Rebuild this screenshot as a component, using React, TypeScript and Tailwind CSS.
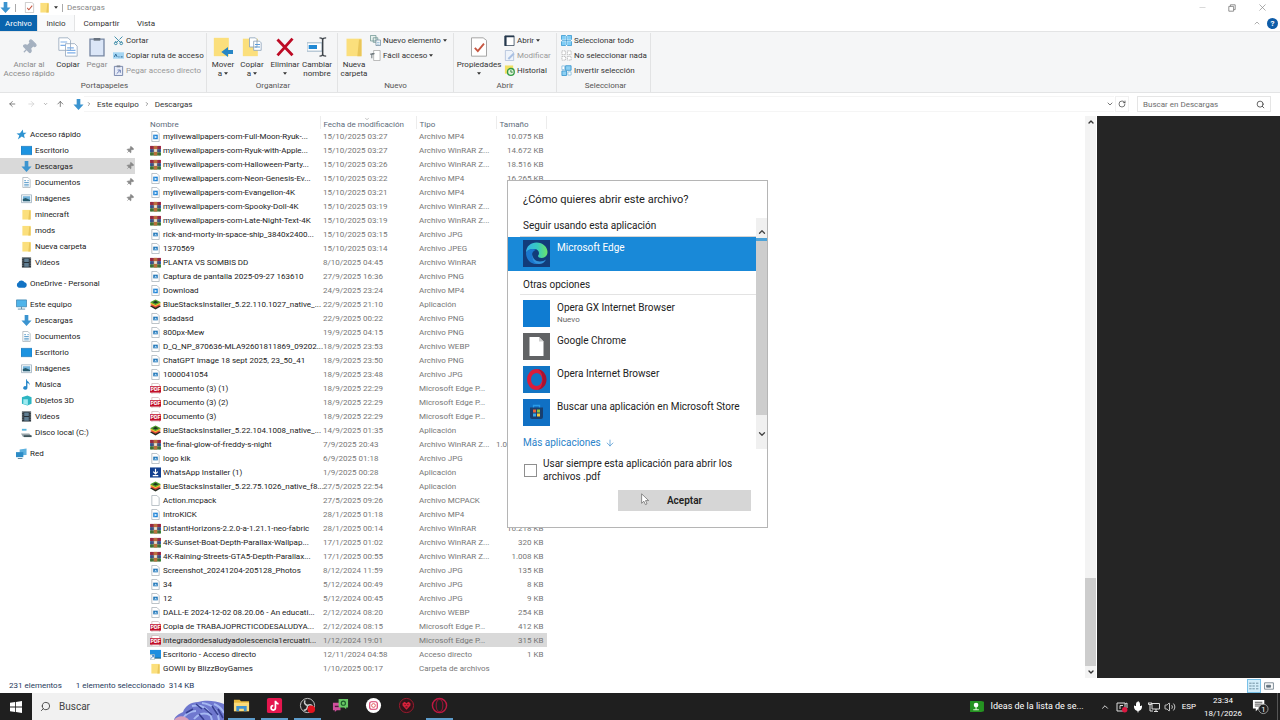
import { useState } from "react";
import {
  ArrowDown,
  ArrowLeft,
  ArrowRight,
  ArrowUp,
  ChevronDown,
  ChevronRight,
  ChevronUp,
  Mic,
  Minus,
  Pin,
  RotateCw,
  Scissors,
  Search,
  Volume2,
  X,
} from "lucide-react";

const files = [
  ["mp4", "mylivewallpapers-com-Full-Moon-Ryuk-...", "15/10/2025 03:27", "Archivo MP4", "10.075 KB"],
  ["rar", "mylivewallpapers-com-Ryuk-with-Apple...", "15/10/2025 03:27", "Archivo WinRAR Z...", "14.672 KB"],
  ["rar", "mylivewallpapers-com-Halloween-Party...", "15/10/2025 03:26", "Archivo WinRAR Z...", "18.516 KB"],
  ["mp4", "mylivewallpapers.com-Neon-Genesis-Ev...", "15/10/2025 03:22", "Archivo MP4", "16.265 KB"],
  ["mp4", "mylivewallpapers-com-Evangelion-4K", "15/10/2025 03:21", "Archivo MP4", ""],
  ["rar", "mylivewallpapers-com-Spooky-Doll-4K", "15/10/2025 03:19", "Archivo WinRAR Z...", ""],
  ["rar", "mylivewallpapers-com-Late-Night-Text-4K", "15/10/2025 03:19", "Archivo WinRAR Z...", ""],
  ["img", "rick-and-morty-in-space-ship_3840x2400...", "15/10/2025 03:15", "Archivo JPG", ""],
  ["img", "1370569", "15/10/2025 03:14", "Archivo JPEG", ""],
  ["rar", "PLANTA VS SOMBIS DD", "8/10/2025 04:45", "Archivo WinRAR", ""],
  ["img", "Captura de pantalla 2025-09-27 163610", "27/9/2025 16:36", "Archivo PNG", ""],
  ["mp4", "Download", "24/9/2025 23:24", "Archivo MP4", ""],
  ["bs", "BlueStacksInstaller_5.22.110.1027_native_...", "22/9/2025 21:10", "Aplicación", ""],
  ["img", "sdadasd", "22/9/2025 00:22", "Archivo PNG", ""],
  ["img", "800px-Mew", "19/9/2025 04:15", "Archivo PNG", ""],
  ["img", "D_Q_NP_870636-MLA92601811869_09202...", "18/9/2025 23:53", "Archivo WEBP", ""],
  ["img", "ChatGPT Image 18 sept 2025, 23_50_41", "18/9/2025 23:50", "Archivo PNG", ""],
  ["img", "1000041054", "18/9/2025 23:48", "Archivo JPG", ""],
  ["pdf", "Documento (3) (1)", "18/9/2025 22:29", "Microsoft Edge P...", ""],
  ["pdf", "Documento (3) (2)", "18/9/2025 22:29", "Microsoft Edge P...", ""],
  ["pdf", "Documento (3)", "18/9/2025 22:29", "Microsoft Edge P...", ""],
  ["bs", "BlueStacksInstaller_5.22.104.1008_native_...", "14/9/2025 01:35", "Aplicación", ""],
  ["rar", "the-final-glow-of-freddy-s-night", "7/9/2025 20:43", "Archivo WinRAR Z...", "1.043.005 KB"],
  ["img", "logo kik", "6/9/2025 01:18", "Archivo JPG", ""],
  ["wa", "WhatsApp Installer (1)", "1/9/2025 00:28", "Aplicación", ""],
  ["bs", "BlueStacksInstaller_5.22.75.1026_native_f8...", "27/5/2025 22:54", "Aplicación", ""],
  ["blank", "Action.mcpack", "27/5/2025 09:26", "Archivo MCPACK", ""],
  ["mp4", "IntroKICK", "28/1/2025 01:18", "Archivo MP4", ""],
  ["rar", "DistantHorizons-2.2.0-a-1.21.1-neo-fabric", "28/1/2025 00:14", "Archivo WinRAR", "16.218 KB"],
  ["rar", "4K-Sunset-Boat-Depth-Parallax-Wallpap...", "17/1/2025 01:02", "Archivo WinRAR Z...", "320 KB"],
  ["rar", "4K-Raining-Streets-GTA5-Depth-Parallax...", "17/1/2025 00:55", "Archivo WinRAR Z...", "1.008 KB"],
  ["img", "Screenshot_20241204-205128_Photos", "8/12/2024 11:59", "Archivo JPG", "135 KB"],
  ["img", "34", "5/12/2024 00:49", "Archivo JPG", "8 KB"],
  ["img", "12", "5/12/2024 00:45", "Archivo JPG", "9 KB"],
  ["img", "DALL-E 2024-12-02 08.20.06 - An educati...", "2/12/2024 08:20", "Archivo WEBP", "254 KB"],
  ["pdf", "Copia de TRABAJOPRCTICODESALUDYA...", "2/12/2024 08:15", "Microsoft Edge P...", "412 KB"],
  ["pdf", "integradordesaludyadolescencia1ercuatri...", "1/12/2024 19:01", "Microsoft Edge P...", "315 KB"],
  ["lnk", "Escritorio - Acceso directo", "12/11/2024 04:58", "Acceso directo", "1 KB"],
  ["folder", "GOWII by BlizzBoyGames", "1/10/2025 00:17", "Carpeta de archivos", ""],
];

const sidebar = [
  {
    icon: "star",
    label: "Acceso rápido",
    items: [
      ["desktop", "Escritorio", true],
      ["down", "Descargas", true],
      ["doc", "Documentos", true],
      ["picture", "Imágenes", true],
      ["folder", "minecraft", false],
      ["folder", "mods", false],
      ["folder", "Nueva carpeta", false],
      ["video", "Vídeos", false],
    ],
  },
  { icon: "cloud", label: "OneDrive - Personal", items: [] },
  {
    icon: "pc",
    label: "Este equipo",
    items: [
      ["down", "Descargas", false],
      ["doc", "Documentos", false],
      ["desktop", "Escritorio", false],
      ["picture", "Imágenes", false],
      ["music", "Música", false],
      ["cube", "Objetos 3D", false],
      ["video", "Vídeos", false],
      ["disk", "Disco local (C:)", false],
    ],
  },
  { icon: "net", label: "Red", items: [] },
];

const Page = () => <path d="M2 .5h5.500L10 3v8.500H2z" fill="#fff" stroke="#a3adb5" strokeWidth=".8" />;

const glyphs: any = {
  mp4: (
    <>
      <Page />
      <path d="M3.500 4h5v5h-5z" fill="#1f83d6" />
      <path d="M5 5l3 1.500-3 1.700z" fill="#d8efff" />
    </>
  ),
  img: (
    <>
      <Page />
      <path d="M3.500 4h5v4h-5z" fill="#2478b8" />
      <path d="M4.500 7l1.500-2 2 2z" fill="#b9defa" />
    </>
  ),
  blank: <Page />,
  rar: (
    <>
      <path d="M0 1h12v3.500H0z" fill="#a52c46" />
      <path d="M0 4.500h12V8H0z" fill="#3560a0" />
      <path d="M0 8h12v3.500H0z" fill="#3b8438" />
      <path d="M4 1h4v10.500H4z" fill="#b9703d" />
      <path d="M4.500 4.500h3v3h-3z" fill="#e8e4d8" />
      <path d="M2 1v10.500M10 1v10.500" stroke="#5d2c3c" strokeWidth=".6" />
    </>
  ),
  bs: (
    <>
      <path d="M0 8l6-3 6 3-6 3.500z" fill="#252a20" />
      <path d="M0 6.500l6-3 6 3-6 3z" fill="#e0483a" />
      <path d="M0 5l6-3 6 3-6 3z" fill="#f2c531" />
      <path d="M0 3.500L6 .5l6 3-6 3z" fill="#4f9d2f" />
      <path d="M3 3.500l3-1.500 3 1.500-3 1.500z" fill="#1d3520" />
    </>
  ),
  pdf: (
    <>
      <path d="M2 .5h7L10.500 2v10H2z" fill="#fff" stroke="#c9a6aa" strokeWidth=".7" />
      <path d="M0 3.500h12v7H0z" fill="#c1102a" />
      <text x="6" y="9.200" textAnchor="middle" fontSize="6" fontWeight="700" fill="#fff">
        PDF
      </text>
    </>
  ),
  wa: (
    <>
      <path d="M0 .5h12v11H0z" fill="#123f8f" />
      <path d="M6 2v5M3.500 5L6 7.500 8.500 5M3 9.500h6" stroke="#fff" strokeWidth="1.300" fill="none" />
    </>
  ),
  lnk: (
    <>
      <path d="M0 1h12v9H0z" fill="#1d8fe0" />
      <path d="M0 6h5v5.500H0z" fill="#fff" stroke="#8aa" strokeWidth=".5" />
      <path d="M1 10.500l3-3.500M2 7h2v2" stroke="#1b66b5" fill="none" strokeWidth=".8" />
      <path d="M5 10h7" stroke="#145" strokeWidth=".8" />
    </>
  ),
  folder: (
    <>
      <path d="M1.500 1h9v10.500h-9z" fill="#fbdf7c" />
      <path d="M9 1.500h1.500v10H8z" fill="#e9c65a" />
    </>
  ),
  star: (
    <path d="M7.500 .5l.4 3.500 3.600.2-2.800 2.200L9.500 10 6.300 8.300 2 11.500l1.600-4.400L.5 5l3.800-.5z" fill="#2e93d1" />
  ),
  desktop: <path d="M0 1.500h12v9H0z" fill="#1c93e0" stroke="#1270b5" strokeWidth=".7" />,
  down: <path d="M4 0h4v6h3.500L6 12 .5 6H4z" fill="#3b94d0" />,
  doc: (
    <>
      <Page />
      <path d="M3.500 4h2M3.500 6h5M3.500 8h5M3.500 9.700h5M7 4h1.500" stroke="#5c9dca" strokeWidth="1" />
    </>
  ),
  picture: (
    <>
      <path d="M.5 2h11v8.500H.5z" fill="#fff" stroke="#8fa5b5" strokeWidth=".8" />
      <path d="M2 3.500h8V9H2z" fill="#74b4dc" />
      <path d="M2 9V6.500L5 5.500l5 2V9z" fill="#285d70" />
    </>
  ),
  video: (
    <>
      <path d="M1 .5h10v11H1z" fill="#263038" />
      <path d="M3.500 1.500h5v4h-5zM3.500 6.500h5v4h-5z" fill="#607e92" />
      <path d="M2 1v10M10 1v10" stroke="#d0d4d6" strokeWidth=".8" strokeDasharray="1 1" />
    </>
  ),
  cloud: <path d="M3 10.500a3 3 0 0 1-.5-5.500 3.700 3.700 0 0 1 6.800-.3 3 3 0 0 1 .4 5.800z" fill="#1273c4" />,
  pc: (
    <>
      <path d="M.5 1h11v7.500H.5z" fill="#4fb4ea" stroke="#3c82ae" strokeWidth=".8" />
      <path d="M2 11h8M6 8.500V11" stroke="#5e8ca8" />
    </>
  ),
  music: <path d="M6 0c.3 3 4 3 3.500 7-.5-2-1.800-2.500-2.500-2.700V9.500A2.300 2 0 1 1 5.500 7.800V0z" fill="#2687c9" />,
  cube: (
    <>
      <path d="M1 2.500L7 .5l4.500 2v7l-4.500 2-6-2z" fill="#2db5c2" />
      <path d="M2.500 4.500h5v6.500l-5-1.200z" fill="#9deaf0" />
    </>
  ),
  disk: (
    <>
      <path d="M1 2h5v2H1z" fill="#58b4dd" />
      <path d="M0 7h9l3 3.500H2z" fill="#99a5ab" />
      <path d="M3 9h8.500v2H3z" fill="#3f555b" />
    </>
  ),
  net: (
    <>
      <path d="M4 1.500l7.500-1v7L4 8z" fill="#5fb2df" />
      <path d="M0 4.500h8v5.500H0z" fill="#2d8cc6" />
      <path d="M2 11.500h5" stroke="#55788e" />
    </>
  ),
  newItem: (
    <>
      <path d="M.5.5h6v6h-6zM3.500 3h5v5h-5z" fill="#e8f1ee" stroke="#68918e" strokeWidth=".8" />
      <path d="M6.500 5.500h5v6h-5z" fill="#fff" stroke="#68869b" strokeWidth=".8" />
      <path d="M7.500 8h3M7.500 10h3" stroke="#70a6c8" strokeWidth=".8" />
    </>
  ),
  easy: (
    <>
      <path d="M4 .5h7v11H4z" fill="#fff" stroke="#a3a3a3" strokeWidth=".8" />
      <path d="M2 9V4h3M0 4.500h4" fill="none" stroke="#606b70" />
    </>
  ),
  open: (
    <>
      <path d="M1 1h10v10.500H1z" fill="#fff" stroke="#25384d" strokeWidth=".8" />
      <path d="M1 .8h10v1.700H1zM.6 1h2.200v10.900H.6z" fill="#25384d" />
    </>
  ),
  edit: (
    <>
      <path d="M1.500.5h7L10.500 3v8.500h-9z" fill="#eef3fa" stroke="#a7b9d4" strokeWidth=".8" />
      <path d="M4 9l6-6 1.500 1.500-6 6z" fill="#a9c0e3" />
    </>
  ),
  history: (
    <>
      <path d="M1 .5h9v9H1z" fill="#f0df63" />
      <circle cx="7.500" cy="7.500" r="3.700" fill="#e2f3dc" stroke="#339a43" strokeWidth="1.400" />
      <path d="M7.500 5.500v2.300h2" stroke="#2a7d3b" fill="none" />
    </>
  ),
  selAll: (
    <>
      <path d="M.5.5h11v11H.5z" fill="#80cdf5" stroke="#2b91ce" strokeWidth=".8" />
      <path d="M6 0v12M0 6h12" stroke="#fff" strokeWidth="1.500" />
      <path d="M6 1v10M1 6h10" stroke="#2b91ce" strokeWidth=".7" />
    </>
  ),
  selNone: (
    <path
      d="M1 1h4v4H1zM7 1h4v4H7zM1 7h4v4H1zM7 7h4v4H7z"
      fill="#fff"
      stroke="#aaa"
      strokeWidth=".8"
      strokeDasharray="1.500 .7"
    />
  ),
  selInv: (
    <>
      <path d="M5 .8h6v5H5zM1 6.500h5v5H1z" fill="#8dd0f3" stroke="#3694cd" strokeWidth=".9" />
      <path d="M1 1h3v4H1zM7.500 7.500h3.500v3.500H7.500z" fill="#fff" stroke="#78b6dc" strokeWidth=".8" />
    </>
  ),
  path: (
    <>
      <path d="M0 2.500h12v7H0z" fill="#a5d5f2" />
      <path d="M1.500 7.500L3 4.500 4.500 7.500M6 7.500h1M8.500 7.500h2" stroke="#24618f" fill="none" />
    </>
  ),
  shortcut: (
    <>
      <path d="M1.500 1.500h9v10h-9z" fill="#e7ecf8" stroke="#7382a8" />
      <path d="M4 .5h4v2H4z" fill="#7b8493" />
      <path d="M4 9.500L7.500 6M5 5.500h3v3" stroke="#6477b0" fill="none" />
    </>
  ),
  check: (
    <>
      <path d="M1.500.5h7L10.500 2v9.500h-9z" fill="#fff" stroke="#a5a5a5" strokeWidth=".6" />
      <path d="M3.500 6.500L5.300 8.500 9 4" stroke="#c65540" strokeWidth="1.100" fill="none" />
    </>
  ),
  copy: (
    <>
      <path d="M.5.5h5.500L7.500 2v6h-7zM4.500 4H10l1.500 1.500v6h-7z" fill="#fff" stroke="#98a8bd" strokeWidth=".5" />
      <path d="M1.500 3h4M1.500 5h3M5.500 6.500h4M5.500 8h5M5.500 9.500h5" stroke="#7eaee7" strokeWidth=".7" />
    </>
  ),
  paste: (
    <>
      <path d="M1.800 1.300h8.400v10H1.800z" fill="#dbe6f7" stroke="#7787a3" strokeWidth=".8" />
      <path d="M4 .6h4v1.600H4z" fill="#68727f" />
    </>
  ),
  move: (
    <>
      <path d="M.5.5h9v11h-9z" fill="#fbdf7c" />
      <path d="M12 7.800H9V6L5 9l4 3v-1.800h3z" fill="#2786c5" />
    </>
  ),
  copyTo: (
    <>
      <path d="M.5 1h9v10.500h-9z" fill="#fbdf7c" />
      <path d="M4.500.5H8L9 1.500V6H4.500zM7 2.500h3.500l1 1V8H7z" fill="#fff" stroke="#8da3bb" strokeWidth=".5" />
      <path d="M7.800 4.500h3M7.800 6h3" stroke="#5d9bd8" strokeWidth=".6" />
    </>
  ),
  del: <path d="M1.500 1.500L10.500 11M10.500 1L1.500 11" stroke="#bd0b25" strokeWidth="1.700" />,
  rename: (
    <>
      <path d="M0 3.500h9v5H0z" fill="#fff" stroke="#9bb3c5" strokeWidth=".6" />
      <path d="M1 4.800h5v2.400H1z" fill="#2189d4" />
      <path
        d="M7.500.5c1.500 0 1.800.5 1.800 1v9c0 .5-.3 1-1.800 1M11.500.5c-1.500 0-2 .5-2 1v9c0 .5.5 1 2 1"
        stroke="#3c4248"
        strokeWidth=".7"
        fill="none"
      />
    </>
  ),
};

const Icon = ({ name, className = "size-[11px]" }: any) => (
  <svg viewBox="0 0 12 12" className={`shrink-0 ${className}`} aria-hidden="true">
    {glyphs[name]}
  </svg>
);

const Caret = () => (
  <svg viewBox="0 0 6 4" className="inline-block h-[3px] w-1 shrink-0" aria-hidden="true">
    <path d="M0 0h6L3 4z" fill="#333" />
  </svg>
);

const BigButton = ({ icon, lines, caret, className, dim }: any) => (
  <button
    type="button"
    className={`flex shrink-0 flex-col items-center whitespace-nowrap ${dim ? "text-[#8a8a8a]" : ""} ${className}`}
  >
    <span className="flex h-[27px] items-center justify-center">
      {icon === "pin" ? (
        <Pin className="size-4 rotate-45 fill-[#a5b1c0] text-[#a5b1c0]" />
      ) : (
        <Icon name={icon} className="size-5" />
      )}
    </span>
    {lines.map((line: string, i: number) => (
      <span key={i} className="flex h-[9px] items-center gap-[2px] leading-[9px]">
        {line}
        {caret && i === lines.length - 1 && <Caret />}
      </span>
    ))}
  </button>
);

const SmallButton = ({ icon, label, caret, dim }: any) => (
  <button type="button" className={`flex h-[15px] items-center gap-[2px] whitespace-nowrap ${dim ? "text-[#999]" : ""}`}>
    {icon === "cut" ? <Scissors className="size-[11px] -rotate-90 text-[#3688a5]" /> : <Icon name={icon} />}
    {label}
    {caret && <Caret />}
  </button>
);

const Group = ({ label, className, children }: any) => (
  <div className={`flex shrink-0 flex-col border-r border-[#e2e3e4] ${className}`}>
    <div className="flex h-[47px] items-start">{children}</div>
    <div className="text-center text-[#555]">{label}</div>
  </div>
);

const Ribbon = () => (
  <div className="flex h-[62px] border-y border-[#e3e4e5] bg-[#f5f6f7] pt-[1px] text-[#333]">
    <Group label="Portapapeles" className="w-[207px] pl-[3px]">
      <BigButton icon="pin" lines={["Anclar al", "Acceso rápido"]} className="w-[52px]" dim />
      <BigButton icon="copy" lines={["Copiar"]} className="w-[26px]" />
      <BigButton icon="paste" lines={["Pegar"]} className="w-8" dim />
      <div>
        <SmallButton icon="cut" label="Cortar" />
        <SmallButton icon="path" label="Copiar ruta de acceso" />
        <SmallButton icon="shortcut" label="Pegar acceso directo" dim />
      </div>
    </Group>
    <Group label="Organizar" className="w-[131px] pl-[2px]">
      <BigButton icon="move" lines={["Mover", "a"]} className="w-[28px]" caret />
      <BigButton icon="copyTo" lines={["Copiar", "a"]} className="w-[30px]" caret />
      <BigButton icon="del" lines={["Eliminar", ""]} className="w-9" caret />
      <BigButton icon="rename" lines={["Cambiar", "nombre"]} className="w-[28px]" />
    </Group>
    <Group label="Nuevo" className="w-[116px]">
      <BigButton icon="folder" lines={["Nueva", "carpeta"]} className="w-8" />
      <div>
        <SmallButton icon="newItem" label="Nuevo elemento" caret />
        <SmallButton icon="easy" label="Fácil acceso" caret />
      </div>
    </Group>
    <Group label="Abrir" className="w-[103px]">
      <BigButton icon="check" lines={["Propiedades", ""]} className="w-[50px]" caret />
      <div>
        <SmallButton icon="open" label="Abrir" caret />
        <SmallButton icon="edit" label="Modificar" dim />
        <SmallButton icon="history" label="Historial" />
      </div>
    </Group>
    <Group label="Seleccionar" className="w-[94px] pl-1">
      <div>
        <SmallButton icon="selAll" label="Seleccionar todo" />
        <SmallButton icon="selNone" label="No seleccionar nada" />
        <SmallButton icon="selInv" label="Invertir selección" />
      </div>
    </Group>
  </div>
);

const Header = () => (
  <header>
    <div className="flex h-[15px] items-center justify-between text-[#888]">
      <div className="flex items-center gap-1">
        <Icon name="down" />
        <span className="h-2 w-px bg-[#aaa]" />
        <Icon name="check" className="ml-1 size-[11px]" />
        <Icon name="folder" />
        <Caret />
        <span className="h-2 w-px bg-[#aaa]" />
        <h1>Descargas</h1>
      </div>
      <div className="flex items-center gap-[21px] pr-3 text-[#888]">
        <button type="button" aria-label="Minimizar">
          <Minus className="size-[9px] text-[#bbb]" strokeWidth={1.5} />
        </button>
        <button type="button" aria-label="Restaurar">
          <svg viewBox="0 0 10 10" className="size-2" fill="none" stroke="#777">
            <path d="M1 3h6v6H1zM3 3V1h6v6H7" />
          </svg>
        </button>
        <button type="button" aria-label="Cerrar">
          <X className="size-[11px]" strokeWidth={1.5} />
        </button>
      </div>
    </div>
    <nav className="flex h-4 items-center text-[#333]">
      <a href="#archivo" className="flex h-4 w-[37px] items-center justify-center bg-[#0a64ad] text-white">
        Archivo
      </a>
      <a
        href="#inicio"
        className="flex h-4 w-[38px] items-center justify-center border-x border-[#e3e4e5] bg-[#f9fafb]"
      >
        Inicio
      </a>
      <a href="#compartir" className="w-[53px] text-center">
        Compartir
      </a>
      <a href="#vista" className="w-9 text-center">
        Vista
      </a>
      <span className="ml-auto flex items-center gap-[6px] pr-[2px]">
        <ChevronUp className="size-2 text-[#888]" />
        <button type="button" className="size-[11px] rounded-full bg-[#0e5ca8] leading-[11px] font-bold text-white">
          ?
        </button>
      </span>
    </nav>
    <Ribbon />
    <div className="flex h-[23px] items-center pb-[1px] text-[#333]">
      <div className="flex w-[84px] items-center gap-2 pl-2 text-[#555]">
        <ArrowLeft className="size-[10px]" />
        <ArrowRight className="ml-[2px] size-[10px] text-[#ccc]" />
        <ChevronDown className="size-[6px]" />
        <ArrowUp className="size-[10px]" />
        <Icon name="down" />
      </div>
      <div className="flex h-4 flex-1 items-center gap-[5px] border-y border-[#f5f5f5] pl-[2px]">
        <ChevronRight className="size-[6px]" />
        <span>Este equipo</span>
        <ChevronRight className="size-[6px]" />
        <span>Descargas</span>
        <ChevronDown className="ml-auto size-2" />
      </div>
      <button
        type="button"
        aria-label="Actualizar"
        className="mr-2 ml-[1px] flex h-4 w-[14px] items-center justify-center border border-[#f0f0f0]"
      >
        <RotateCw className="size-2" />
      </button>
      <label className="mr-[9px] flex h-4 w-[134px] items-center border border-[#e5e5e5] px-[5px]">
        <input
          type="search"
          placeholder="Buscar en Descargas"
          aria-label="Buscar en Descargas"
          className="w-0 flex-1 outline-none placeholder:text-[#6d6d6d]"
        />
        <Search className="size-[9px]" />
      </label>
    </div>
  </header>
);

const Sidebar = () => (
  <aside className="flex w-[147px] shrink-0 flex-col gap-[5px] pt-[10px] text-[#222]">
    {sidebar.map((section, s) => (
      <div key={section.label}>
        <a href="#" className="flex h-4 items-center gap-[3px] pl-4">
          <Icon name={section.icon} />
          {section.label}
        </a>
        {section.items.map(([icon, label, pinned]: any) => (
          <a
            key={label}
            href="#"
            className={`mr-3 flex h-4 items-center gap-[3px] pl-[21px] ${s === 0 && label === "Descargas" ? "bg-[#d9d9d9]" : ""}`}
          >
            <Icon name={icon} />
            {label}
            {pinned && <Pin className="mr-[1px] ml-auto size-2 rotate-45 fill-[#888] text-[#888]" />}
          </a>
        ))}
      </div>
    ))}
  </aside>
);

const FileTable = () => {
  const [selected, setSelected] = useState(36);

  return (
    <main className="relative min-w-0 flex-1">
      <ChevronDown className="absolute top-0 left-[217px] size-[6px] text-[#888]" />
      <table className="w-[400px] table-fixed whitespace-nowrap text-[#777]">
        <thead>
          <tr className="h-[13px] text-left text-[#5d6b7b]">
            <th className="w-[173px] border-r border-[#ececec] pt-1 pl-[3px] leading-[9px] font-normal">Nombre</th>
            <th className="w-24 border-r border-[#ececec] pt-1 pl-[3px] leading-[9px] font-normal">
              Fecha de modificación
            </th>
            <th className="w-20 border-r border-[#ececec] pt-1 pl-[3px] leading-[9px] font-normal">Tipo</th>
            <th className="border-r border-[#ececec] pt-1 pl-[3px] leading-[9px] font-normal">Tamaño</th>
          </tr>
        </thead>
        <tbody>
          {files.map(([icon, name, date, type, size], i) => (
            <tr key={name} onClick={() => setSelected(i)} className={`h-[14px] ${i === selected ? "bg-[#d9d9d9]" : ""}`}>
              <td className="pl-[3px]">
                <div className="flex items-center gap-[2px]">
                  <Icon name={icon} />
                  <span className="text-[#222]">{name}</span>
                </div>
              </td>
              <td className="pl-[3px]">{date}</td>
              <td className="pl-[3px]">{type}</td>
              <td className="pr-[3px] text-right">{size}</td>
            </tr>
          ))}
        </tbody>
      </table>
    </main>
  );
};

const EdgeLogo = () => (
  <svg viewBox="0 0 27 27" className="size-[27px] shrink-0" aria-hidden="true">
    <defs>
      <linearGradient id="edgeTop" x1="0" x2="1">
        <stop offset="0" stopColor="#35b3ea" />
        <stop offset=".55" stopColor="#38cbbd" />
        <stop offset="1" stopColor="#6ce36a" />
      </linearGradient>
    </defs>
    <path d="M0 0h27v27H0z" fill="#123c7a" />
    <path
      d="M3 13C3 6 8 2.500 13.500 2.500 20 2.500 24.500 7 24.500 12c0 4-3 6-6 6-2 0-3.500-1-3.500-2 0-.7 1-1 1-3 0-2-2-4-4.500-4C7 9 3.500 11 3 13z"
      fill="url(#edgeTop)"
    />
    <path d="M3 13c.5-2.500 3.500-4 7-4 1 0 2 .2 3 .8-3 1-4 3-4 5.500 0 4 3 7.500 7 8.500C9 25.500 3 20 3 13z" fill="#1b78cf" />
    <path d="M9.500 14c-.3 4 3 7.500 7.500 7.500 2.500 0 4.500-.7 6-2-1.500 3-4 4.500-7 4.500-4.500 0-8-5-6.500-10z" fill="#3192dc" />
  </svg>
);

const apps = [
  {
    name: "Opera GX Internet Browser",
    note: "Nuevo",
    art: <path d="M0 0h27v27H0z" fill="#0f7cd2" />,
  },
  {
    name: "Google Chrome",
    art: (
      <>
        <path d="M0 0h27v27H0z" fill="#616365" />
        <path d="M6.500 4h9.500l4.500 4.500V23h-14z" fill="#fff" />
        <path d="M16 4v4.500h4.500z" fill="#cfcfcf" />
      </>
    ),
  },
  {
    name: "Opera Internet Browser",
    art: (
      <>
        <path d="M0 0h27v27H0z" fill="#1275c4" />
        <ellipse cx="13.500" cy="13.500" rx="7.500" ry="8.500" fill="none" stroke="#da1d3c" strokeWidth="4" />
        <path
          d="M15 3.200c5 .8 8.500 5 8.500 10.300S20 23 15 23.800c3-1.500 4.500-5.500 4.500-10.300S18 4.700 15 3.200z"
          fill="#a91330"
        />
      </>
    ),
  },
  {
    name: "Buscar una aplicación en Microsoft Store",
    art: (
      <>
        <path d="M0 0h27v27H0z" fill="#1070c4" />
        <path d="M10.500 9V6.500h6V9" fill="none" stroke="#2a9be8" strokeWidth="1.300" />
        <path d="M7 8.500h13v9.500a2 2 0 0 1-2 2H9a2 2 0 0 1-2-2z" fill="#183f70" />
        <path d="M10 10.500h3v3h-3z" fill="#e8643b" />
        <path d="M14 10.500h3v3h-3z" fill="#8dc63f" />
        <path d="M10 14.500h3v3h-3z" fill="#39a9e8" />
        <path d="M14 14.500h3v3h-3z" fill="#f5cb3d" />
      </>
    ),
  },
];

const OpenWithDialog = () => (
  <section
    role="dialog"
    aria-labelledby="dialogTitle"
    className="absolute top-[180px] left-[507px] w-[261px] border border-[#b5b5b5] bg-white pb-4 text-[10px] text-[#222]"
  >
    <h2 id="dialogTitle" className="flex h-[37px] items-center pl-[15px] text-[11px]">
      ¿Cómo quieres abrir este archivo?
    </h2>
    <div className="flex">
      <div className="min-w-0 flex-1">
        <h3 className="ml-3 border-b border-[#d5d5d5] pb-[3px] pl-[3px] leading-[15px]">
          Seguir usando esta aplicación
        </h3>
        <button type="button" className="flex h-[34px] w-full gap-[7px] bg-[#1989d8] pt-[3px] pl-[15px] text-white">
          <EdgeLogo />
          <span className="leading-[15px]">Microsoft Edge</span>
        </button>
        <h3 className="ml-3 border-b border-[#e3e3e3] pt-[6px] pb-[2px] pl-[3px] leading-[15px]">Otras opciones</h3>
        <div className="flex flex-col gap-[6px] pt-[5px] pl-[15px]">
          {apps.map((app) => (
            <button key={app.name} type="button" className="flex gap-[7px] text-left whitespace-nowrap">
              <svg viewBox="0 0 27 27" className="size-[27px] shrink-0" aria-hidden="true">
                {app.art}
              </svg>
              <span>
                <span className="block leading-[15px]">{app.name}</span>
                {app.note && <span className="block text-[8px] leading-[9px] text-[#666]">{app.note}</span>}
              </span>
            </button>
          ))}
        </div>
        <a href="#mas" className="mt-[11px] ml-[15px] flex items-center gap-1 leading-[12px] text-[#2a82c9]">
          Más aplicaciones
          <ArrowDown className="size-[10px]" strokeWidth={1.5} />
        </a>
      </div>
      <div className="flex w-[11px] flex-col items-center bg-[#f0f0f0] text-[#444]">
        <span className="flex h-5 items-end pb-[1px]">
          <ChevronUp className="size-[10px]" strokeWidth={3} />
        </span>
        <span className="h-[177px] w-full border-t-[3px] border-[#4ea3d8] bg-[#cdcdcd]" />
        <span className="flex flex-1 items-center pt-1">
          <ChevronDown className="size-[10px]" strokeWidth={3} />
        </span>
      </div>
    </div>
    <label className="mt-2 flex items-center gap-[6px] pl-4 leading-[13px]">
      <input type="checkbox" className="size-[13px] shrink-0 appearance-none border border-[#8f8f8f] bg-white" />
      <span className="w-[200px]">Usar siempre esta aplicación para abrir los archivos .pdf</span>
    </label>
    <button type="button" className="mt-[7px] mr-4 ml-auto block h-[21px] w-[133px] bg-[#d6d6d6] font-semibold">
      Aceptar
    </button>
  </section>
);

const Cursor = () => (
  <svg viewBox="0 0 10 14" className="absolute top-[493px] left-[641px] h-[13px] w-[9px]" aria-hidden="true">
    <path d="M.7.7v10.500l2.500-2.300 1.700 3.800 1.800-.8-1.700-3.700h3.500z" fill="#fff" stroke="#666" strokeWidth=".8" />
  </svg>
);

const taskApps = [
  {
    name: "Explorador de archivos",
    open: true,
    art: (
      <>
        <path d="M1 3h6l1.500 1.500H17V15H1z" fill="#e8b93c" />
        <path d="M1 6h16v9H1z" fill="#fadb7a" />
        <path d="M3.500 15V9.500h11V15h-3v-2.500h-5V15z" fill="#4093cf" />
      </>
    ),
  },
  {
    name: "TikTok",
    open: true,
    art: (
      <>
        <rect x="1" y="1" width="16" height="16" rx="2" fill="#e5164e" />
        <path
          d="M10 4v7.500a2.300 2.300 0 1 1-2.300-2.300M10 4c.3 2 1.500 3 3.300 3.200"
          fill="none"
          stroke="#fff"
          strokeWidth="1.800"
        />
      </>
    ),
  },
  {
    name: "OBS Studio",
    open: true,
    art: (
      <>
        <circle cx="9" cy="9" r="7.500" fill="#222" stroke="#c9c9c9" />
        <path
          d="M9 9c-3-1-4-3-2.500-5.500M9 9c3-1.500 5-.5 5.500 2M9 9c.3 3-1.500 5-4 5"
          fill="none"
          stroke="#c9c9c9"
          strokeWidth="1.600"
        />
        <circle cx="13" cy="13" r="4" fill="#e3131d" />
      </>
    ),
  },
  {
    name: "Chat",
    open: false,
    art: (
      <>
        <path d="M1 6h8v8H5l-2 2v-2H1z" fill="#cf4f9d" />
        <path d="M7 2h10v9h-2v2l-2-2H7z" fill="#69c765" />
        <circle cx="12" cy="6.500" r="2.200" fill="none" stroke="#1b5a2a" strokeWidth="1.200" />
        <path d="M3 10h4" stroke="#51173c" strokeWidth="1.500" />
      </>
    ),
  },
  {
    name: "Instagram",
    open: false,
    art: (
      <>
        <circle cx="9" cy="9" r="8" fill="#fff" />
        <rect x="5" y="5" width="8" height="8" rx="2" fill="none" stroke="#d63a67" strokeWidth="1.200" />
        <circle cx="9" cy="9" r="2" fill="none" stroke="#e05b58" />
      </>
    ),
  },
  {
    name: "GX Control",
    open: false,
    art: (
      <>
        <circle cx="9" cy="9" r="7.500" fill="#32141a" stroke="#a01b2e" />
        <path d="M9 13.500L4.800 9V6.500L7 5l2 1.500L11 5l2.200 1.500V9z" fill="#d7213b" />
        <path d="M7 8h1M10 8h1M8 10.500h2" stroke="#32141a" />
      </>
    ),
  },
  {
    name: "Opera GX",
    open: true,
    art: (
      <>
        <circle cx="9" cy="9" r="7.500" fill="none" stroke="#c01942" strokeWidth="1.500" />
        <ellipse cx="9" cy="9" rx="3.500" ry="6.500" fill="none" stroke="#8e1535" strokeWidth="1.300" />
      </>
    ),
  },
];

const Taskbar = () => (
  <footer className="flex h-[27px] shrink-0 items-center bg-[#1f1f1f] text-[10px] text-white">
    <button type="button" aria-label="Inicio" className="flex w-8 justify-center">
      <svg viewBox="0 0 12 12" className="size-[12px]" fill="#fff">
        <path d="M0 1.700L5.200 1v4.600H0zM6 .9l6-.9v5.600H6zM0 6.400h5.200V11L0 10.300zM6 6.400h6V12l-6-.9z" />
      </svg>
    </button>
    <label className="flex h-[27px] w-48 items-center gap-2 bg-[#f1f1f1] pl-2 text-[#444]">
      <Search className="size-[11px] shrink-0 -scale-x-100" />
      <input
        type="search"
        placeholder="Buscar"
        aria-label="Buscar"
        className="w-0 flex-1 outline-none placeholder:text-[#444]"
      />
      <svg viewBox="0 0 50 27" className="h-[27px] w-[50px] shrink-0" aria-hidden="true">
        <path d="M0 27c1-4 5-6 9-8 2-6 8-10 15-10 7-2 16-2 26 2v16z" fill="#6f78cf" />
        <path
          d="M8 27c3-6 8-9 14-9M18 13c8-2 17 1 20 14M28 10c9 1 15 5 17 17M20 26c4-5 10-7 16-4M40 11c5 2 8 5 10 9"
          stroke="#a5b8f2"
          strokeWidth="2"
          fill="none"
        />
        <path
          d="M12 20l7-4M30 15l8 7M25 21l5 6M38 13l6 9M22 11l6 5M44 16l5 9"
          stroke="#363f91"
          strokeWidth="1.600"
          fill="none"
        />
        <path d="M0 27c4-5 11-5 15 0z" fill="#d9a0bb" />
      </svg>
    </label>
    <div className="flex pl-[1px]">
      {taskApps.map((app) => (
        <button key={app.name} type="button" aria-label={app.name} className="flex w-[33px] justify-center">
          <span
            className={`flex h-[27px] w-[27px] items-center justify-center border-b-2 ${app.open ? "border-[#5d9ccb]" : "border-transparent"}`}
          >
            <svg viewBox="0 0 18 18" className="size-[17px]">
              {app.art}
            </svg>
          </span>
        </button>
      ))}
    </div>
    <div className="ml-auto flex items-center">
      <svg viewBox="0 0 15 14" className="mr-[6px] h-[13px] w-[14px]" aria-hidden="true">
        <path d="M0 1h12l3 1v10l-3 1H0z" fill="#259321" />
        <circle cx="6.500" cy="5.500" r="2.500" fill="#fff" />
        <path d="M6.500 7v3M3.500 10.500h6" stroke="#d8f7cf" strokeWidth="1.200" />
      </svg>
      <span className="text-[9px]">Ideas de la lista de se...</span>
      <div className="ml-4 flex items-center gap-1">
        <ChevronUp className="mr-[2px] size-[10px]" />
        <svg viewBox="0 0 12 12" className="size-3" fill="none" stroke="#ddd" aria-hidden="true">
          <path d="M1 2h8v8H1zM9 3l2-1v5M4 4.500h3M4 4.500V8" />
          <circle cx="8.700" cy="8.700" r="2.700" fill="#dc1840" stroke="none" />
        </svg>
        <Mic className="size-3 fill-white" />
        <svg viewBox="0 0 12 12" className="size-3" fill="none" stroke="#ddd" aria-hidden="true">
          <path d="M4 2.500h7.500v5.500H4zM6 10.500h4M8 8v2.500M2 1v4M.5 1.500v2h3v-2M2 5v5h3" />
        </svg>
        <Volume2 className="size-3" strokeWidth={1.5} />
      </div>
      <span className="ml-[6px] text-[8px]">ESP</span>
      <time className="ml-2 w-[38px] text-center text-[8px]">
        23:34
        <br />
        18/1/2026
      </time>
      <button type="button" aria-label="Notificaciones" className="ml-[10px]">
        <svg viewBox="0 0 18 18" className="size-[17px]">
          <path d="M1 2h12v9H7l-3 3v-3H1z" fill="#fff" />
          <path d="M3 4.500h8M3 6.500h8M3 8.500h5" stroke="#1f1f1f" strokeWidth=".8" />
          <circle cx="12" cy="11.500" r="5" fill="#1f1f1f" stroke="#bbb" strokeWidth=".8" />
          <text x="12" y="14.500" textAnchor="middle" fontSize="8" fill="#fff">
            1
          </text>
        </svg>
      </button>
      <span className="mr-[2px] ml-2 h-[27px] w-px bg-[#555]" />
    </div>
  </footer>
);

const App = () => {
  return (
    <div className="relative flex min-h-screen flex-col overflow-hidden bg-white font-['Roboto','Noto_Sans',sans-serif] text-[8px] leading-[13px]">
      <Header />
      <div className="flex flex-1">
        <Sidebar />
        <FileTable />
        <div className="mr-[1px] flex w-[11px] flex-col items-center bg-[#f3f3f3] text-[#333]">
          <ChevronUp className="my-[2px] size-2" strokeWidth={4} />
          <span className="mt-auto h-[88px] w-full bg-[#cdcdcd]" />
          <ChevronDown className="my-[2px] size-2" strokeWidth={4} />
        </div>
        <div className="w-[183px] bg-[#252525]" />
      </div>
      <div className="flex h-[15px] items-center gap-[14px] pr-1 pl-[9px] text-[#1e395b]">
        <span>231 elementos</span>
        <span>1 elemento seleccionado&nbsp; 314 KB</span>
        <div className="ml-auto flex gap-[1px]">
          <button
            type="button"
            aria-label="Detalles"
            className="flex size-[14px] items-center justify-center border border-[#79c1e8] bg-[#d2edfa]"
          >
            <svg viewBox="0 0 12 10" className="h-2 w-[10px]" stroke="#57788c">
              <path d="M0 1.500h3M0 5h3M0 8.500h3M4 1.500h3M4 5h3M4 8.500h3M8.500 1.500h3M8.500 5h3M8.500 8.500h3" />
            </svg>
          </button>
          <button type="button" aria-label="Iconos grandes" className="flex size-[14px] items-center justify-center">
            <svg viewBox="0 0 12 10" className="h-2 w-[10px]" fill="none" stroke="#61727e">
              <path d="M.5 1h11v8H.5z" />
              <path d="M3 4h5v2.500H3z" fill="#61727e" />
            </svg>
          </button>
        </div>
      </div>
      <Taskbar />
      <OpenWithDialog />
      <Cursor />
    </div>
  );
};

export default App;
